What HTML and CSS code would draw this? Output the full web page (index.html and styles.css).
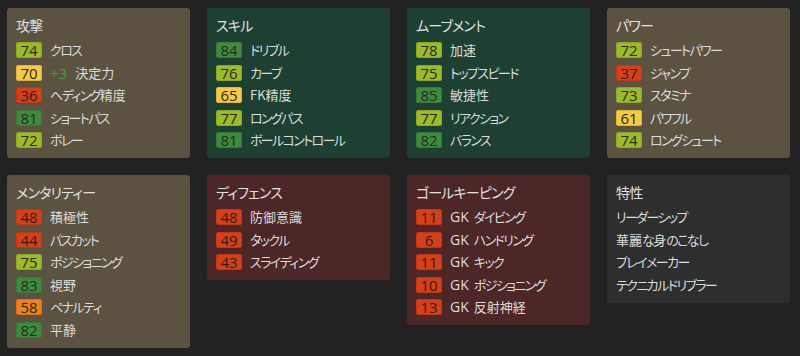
FILE: index.html
```html
<!DOCTYPE html>
<html lang="ja">
<head>
<meta charset="utf-8">
<link rel="stylesheet" href="styles.css">
</head>
<body>
<div class="grid">
  <section class="card brown">
    <h2>攻撃</h2>
    <ul>
      <li><span class="b lime">74</span><span class="t">クロス</span></li>
      <li><span class="b yellow">70</span><span class="plus">+3</span><span class="kj">決定力</span></li>
      <li><span class="b red">36</span><span class="t">ヘディング<span class="kj">精度</span></span></li>
      <li><span class="b green">81</span><span class="t">ショートパス</span></li>
      <li><span class="b lime">72</span><span class="t">ボレー</span></li>
    </ul>
  </section>
  <section class="card teal">
    <h2>スキル</h2>
    <ul>
      <li><span class="b green">84</span><span class="t">ドリブル</span></li>
      <li><span class="b lime">76</span><span class="t">カーブ</span></li>
      <li><span class="b yellow">65</span><span class="kj">FK精度</span></li>
      <li><span class="b lime">77</span><span class="t">ロングパス</span></li>
      <li><span class="b green">81</span><span class="t">ボールコントロール</span></li>
    </ul>
  </section>
  <section class="card teal">
    <h2>ムーブメント</h2>
    <ul>
      <li><span class="b lime">78</span><span class="kj">加速</span></li>
      <li><span class="b lime">75</span><span class="t">トップスピード</span></li>
      <li><span class="b green">85</span><span class="kj">敏捷性</span></li>
      <li><span class="b lime">77</span><span class="t">リアクション</span></li>
      <li><span class="b green">82</span><span class="t">バランス</span></li>
    </ul>
  </section>
  <section class="card brown">
    <h2>パワー</h2>
    <ul>
      <li><span class="b lime">72</span><span class="t">シュートパワー</span></li>
      <li><span class="b red">37</span><span class="t">ジャンプ</span></li>
      <li><span class="b lime">73</span><span class="t">スタミナ</span></li>
      <li><span class="b yellow">61</span><span class="t">パワフル</span></li>
      <li><span class="b lime">74</span><span class="t">ロングシュート</span></li>
    </ul>
  </section>
  <section class="card brown">
    <h2>メンタリティー</h2>
    <ul>
      <li><span class="b red">48</span><span class="kj">積極性</span></li>
      <li><span class="b red">44</span><span class="t">パスカット</span></li>
      <li><span class="b lime">75</span><span class="t">ポジショニング</span></li>
      <li><span class="b green">83</span><span class="kj">視野</span></li>
      <li><span class="b orange">58</span><span class="t">ペナルティ</span></li>
      <li><span class="b green">82</span><span class="kj">平静</span></li>
    </ul>
  </section>
  <section class="card maroon">
    <h2>ディフェンス</h2>
    <ul>
      <li><span class="b red">48</span><span class="kj">防御意識</span></li>
      <li><span class="b red">49</span><span class="t">タックル</span></li>
      <li><span class="b red">43</span><span class="t">スライディング</span></li>
    </ul>
  </section>
  <section class="card maroon">
    <h2>ゴールキーピング</h2>
    <ul>
      <li><span class="b red">11</span><span class="lat">GK</span><span class="t">ダイビング</span></li>
      <li><span class="b red">6</span><span class="lat">GK</span><span class="t">ハンドリング</span></li>
      <li><span class="b red">11</span><span class="lat">GK</span><span class="t">キック</span></li>
      <li><span class="b red">10</span><span class="lat">GK</span><span class="t">ポジショニング</span></li>
      <li><span class="b red">13</span><span class="lat">GK</span><span class="kj">反射神経</span></li>
    </ul>
  </section>
  <section class="card gray">
    <h2>特性</h2>
    <ul class="traits">
      <li class="t">リーダーシップ</li>
      <li class="t"><span class="kj">華麗</span>な<span class="kj">身</span>のこなし</li>
      <li class="t">プレイメーカー</li>
      <li class="t">テクニカルドリブラー</li>
    </ul>
  </section>
</div>
</body>
</html>
```
FILE: styles.css
```css
* { box-sizing: border-box; }
html, body {
  margin: 0;
  padding: 0;
  background: #222222;
  width: 800px;
  height: 356px;
  overflow: hidden;
  font-family: "Noto Sans CJK JP", "Noto Sans", sans-serif;
  font-feature-settings: "palt";
  color: #dcdcdc;
}
.grid {
  display: grid;
  grid-template-columns: repeat(4, 183px);
  column-gap: 17px;
  row-gap: 17px;
  padding: 8px 0 0 7px;
  align-items: start;
}
.card {
  border-radius: 3px;
  padding: 7px 9px 10px 9px;
}
.brown { background: #5b5241; }
.teal { background: #1e4033; }
.maroon { background: #4d2627; }
.gray { background: #2e2e2e; }
h2 {
  margin: 0;
  font-size: 14px;
  font-weight: normal;
  line-height: 20px;
  height: 27px;
  letter-spacing: -0.8px;
  color: #e0e0e0;
}
ul {
  list-style: none;
  margin: 0;
  padding: 0;
  display: flex;
  flex-direction: column;
  gap: 6.5px;
}
li {
  display: flex;
  align-items: center;
  height: 16px;
  font-size: 13px;
  line-height: 16px;
  white-space: nowrap;
}
.traits li { display: block; }
.t { letter-spacing: -1.6px; }
.kj { letter-spacing: 0; }
.lat {
  margin-right: 5px;
  font-family: "Open Sans", "Noto Sans", sans-serif;
  font-size: 14px;
  letter-spacing: 0;
}
.b {
  width: 26px;
  height: 16px;
  border-radius: 2px;
  margin-right: 8px;
  text-align: center;
  font-family: "Open Sans", "Noto Sans", sans-serif;
  font-size: 15px;
  line-height: 14px;
  color: #2c2a1e;
  flex: none;
}
.lime { background: #9cba2a; border: 1px solid #8aa622; }
.yellow { background: #f7c944; border: 1px solid #e2b43a; }
.red { background: #d4401a; border: 1px solid #c23614; color: #3a1a10; }
.green { background: #3d8b3d; border: 1px solid #357a35; }
.orange { background: #f0801f; border: 1px solid #da701a; }
.plus {
  color: #3fa03f;
  margin-right: 8px;
  font-size: 15px;
  font-family: "Open Sans", "Noto Sans", sans-serif;
}
.traits { gap: 6.5px; }
```
